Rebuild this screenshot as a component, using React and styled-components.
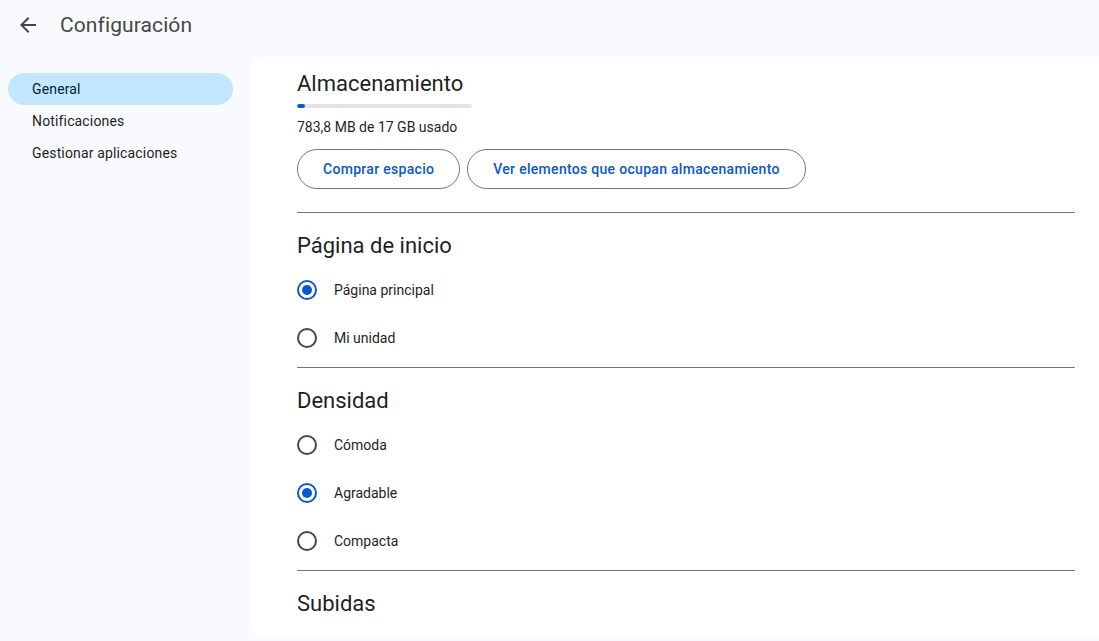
import React from "react";
import styled, { createGlobalStyle } from "styled-components";

const Global = createGlobalStyle`
  html, body { margin: 0; padding: 0; }
  body {
    background: #f8fafd;
    font-family: Roboto, "Noto Sans", "Liberation Sans", sans-serif;
    color: #1f1f1f;
    overflow: hidden;
  }
`;

const Page = styled.div`
  width: 1099px;
  height: 641px;
  display: flex;
  flex-direction: column;
  background: #f8fafd;
`;

const Header = styled.header`
  height: 50px;
  display: flex;
  align-items: center;
  padding-left: 16px;
  gap: 20px;
`;

const IconButton = styled.button`
  width: 24px;
  height: 24px;
  border: none;
  background: none;
  padding: 0;
  display: flex;
  align-items: center;
  justify-content: center;
  color: #444746;
  cursor: pointer;
`;

const Title = styled.h1`
  margin: 0;
  font-size: 21px;
  font-weight: 400;
  color: #444746;
  letter-spacing: 0.1px;
`;

const Body = styled.div`
  flex: 1;
  display: grid;
  grid-template-columns: 249px 1fr;
  margin-top: 7px;
  margin-bottom: 4px;
  min-height: 0;
`;

const Sidebar = styled.nav`
  padding: 16px 16px 0 8px;
  display: flex;
  flex-direction: column;
`;

const NavItem = styled.div`
  height: 32px;
  display: flex;
  align-items: center;
  padding-left: 24px;
  border-radius: 16px;
  font-size: 14px;
  letter-spacing: 0.15px;
  color: ${(p) => (p.$active ? "#001d35" : "#1f1f1f")};
  background: ${(p) => (p.$active ? "#c2e7ff" : "transparent")};
`;

const Panel = styled.main`
  background: #ffffff;
  border-radius: 16px 0 0 16px;
  padding: 13px 24px 0 48px;
  overflow: hidden;
`;

const Heading = styled.h2`
  margin: 0;
  font-size: 22px;
  line-height: 28px;
  font-weight: 400;
  color: #1f1f1f;
`;

const Bar = styled.div`
  margin-top: 6px;
  width: 175px;
  height: 4px;
  border-radius: 2px;
  background: #e3e3e3;
  overflow: hidden;
`;

const BarFill = styled.div`
  height: 100%;
  background: #0b57d0;
  border-radius: 2px;
`;

const Usage = styled.div`
  margin-top: 9px;
  font-size: 14px;
  line-height: 20px;
  color: #1f1f1f;
`;

const ButtonRow = styled.div`
  margin-top: 12px;
  display: flex;
  gap: 7px;
`;

const OutlineButton = styled.button`
  height: 40px;
  padding: 0 25px;
  border: 1px solid #747775;
  border-radius: 20px;
  background: #fff;
  color: #0b57d0;
  font-family: Roboto, "Noto Sans", sans-serif;
  font-size: 14px;
  font-weight: 500;
  letter-spacing: 0.3px;
  cursor: pointer;
`;

const Section = styled.section`
  margin-top: ${(p) => p.$top || 0}px;
  border-top: 1px solid #747775;
  padding-top: 19px;
  padding-bottom: 5px;
`;

const Options = styled.div`
  margin-top: 6px;
  display: flex;
  flex-direction: column;
`;

const OptionRow = styled.label`
  height: 48px;
  display: flex;
  align-items: center;
  gap: 17px;
  font-size: 14px;
  color: #1f1f1f;
  cursor: pointer;
`;

const RadioCircle = styled.span`
  width: 20px;
  height: 20px;
  box-sizing: border-box;
  border-radius: 50%;
  border: 2px solid ${(p) => (p.$checked ? "#0b57d0" : "#444746")};
  display: flex;
  align-items: center;
  justify-content: center;
  &::after {
    content: "";
    width: 10px;
    height: 10px;
    border-radius: 50%;
    background: #0b57d0;
    display: ${(p) => (p.$checked ? "block" : "none")};
  }
`;

function Radio({ label, checked }) {
  return (
    <OptionRow>
      <RadioCircle $checked={checked} />
      {label}
    </OptionRow>
  );
}

export default function App() {
  const used = 783.8;
  const total = 17 * 1024;
  const pct = Math.max(4, (used / total) * 100);
  return (
    <Page>
      <Global />
      <Header>
        <IconButton aria-label="Atrás">
          <svg width="24" height="24" viewBox="0 0 24 24" fill="currentColor">
            <path d="M20 11H7.83l5.59-5.59L12 4l-8 8 8 8 1.41-1.41L7.83 13H20v-2z" />
          </svg>
        </IconButton>
        <Title>Configuración</Title>
      </Header>
      <Body>
        <Sidebar>
          <NavItem $active>General</NavItem>
          <NavItem>Notificaciones</NavItem>
          <NavItem>Gestionar aplicaciones</NavItem>
        </Sidebar>
        <Panel>
          <Heading>Almacenamiento</Heading>
          <Bar>
            <BarFill style={{ width: `${pct}%` }} />
          </Bar>
          <Usage>783,8 MB de 17 GB usado</Usage>
          <ButtonRow>
            <OutlineButton>Comprar espacio</OutlineButton>
            <OutlineButton>Ver elementos que ocupan almacenamiento</OutlineButton>
          </ButtonRow>
          <Section $top={23}>
            <Heading>Página de inicio</Heading>
            <Options>
              <Radio label="Página principal" checked />
              <Radio label="Mi unidad" />
            </Options>
          </Section>
          <Section>
            <Heading>Densidad</Heading>
            <Options>
              <Radio label="Cómoda" />
              <Radio label="Agradable" checked />
              <Radio label="Compacta" />
            </Options>
          </Section>
          <Section>
            <Heading>Subidas</Heading>
          </Section>
        </Panel>
      </Body>
    </Page>
  );
}
